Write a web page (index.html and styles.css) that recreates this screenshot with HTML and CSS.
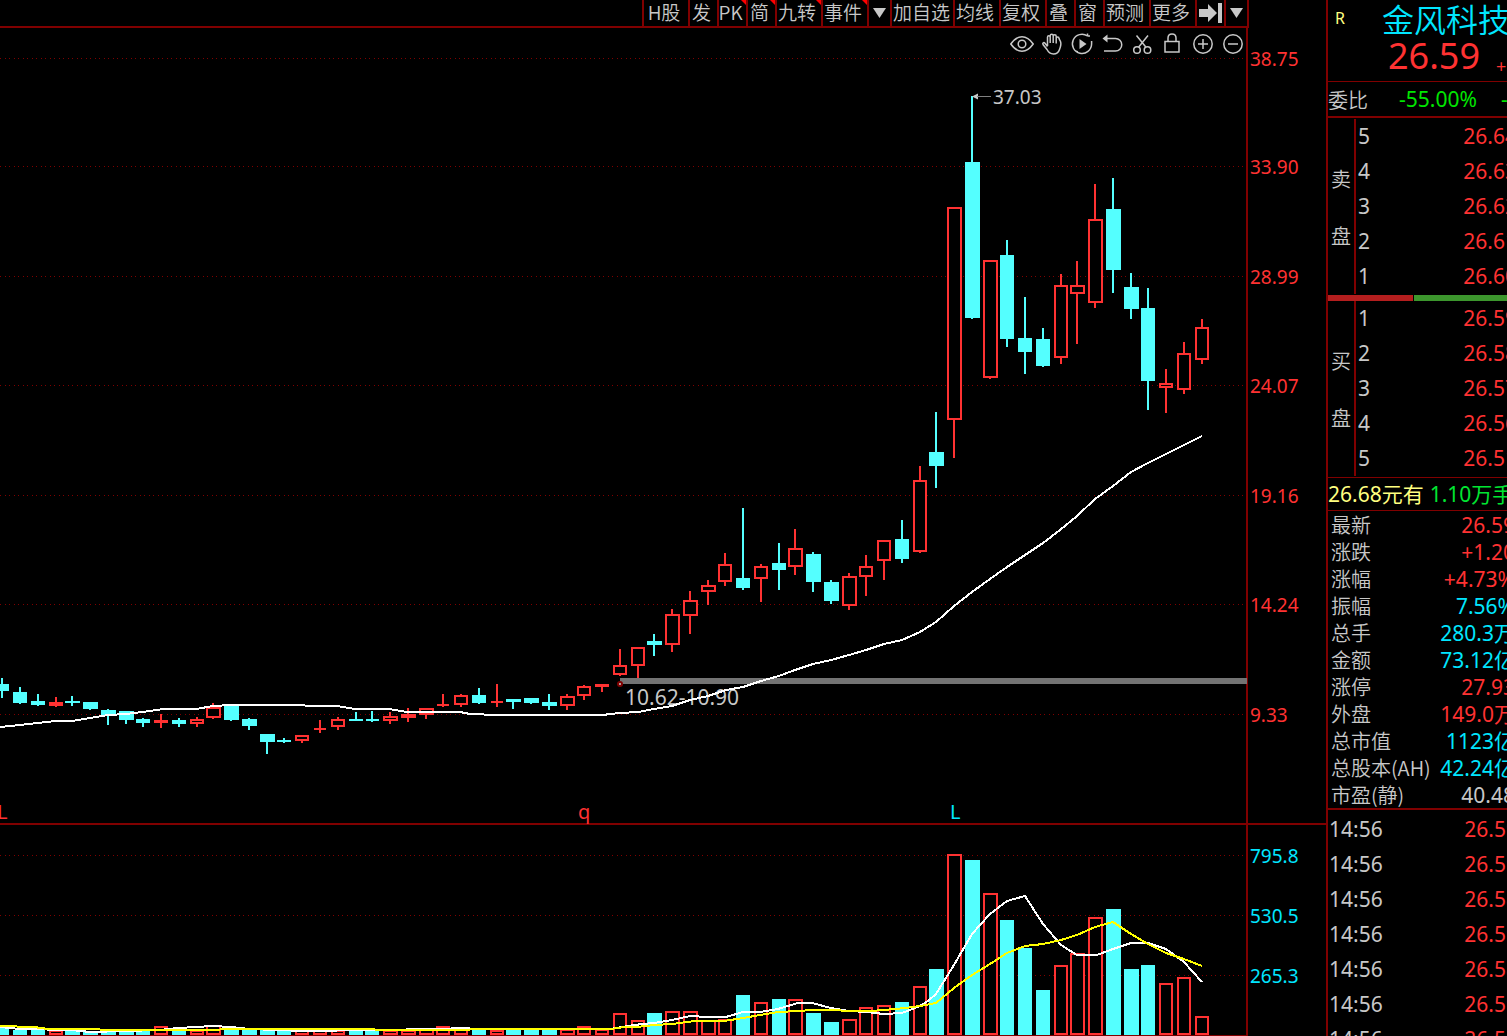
FILE: index.html
```
<!DOCTYPE html>
<html lang="zh-CN">
<head>
<meta charset="utf-8">
<title>金风科技 日K线</title>
<link rel="stylesheet" href="styles.css">
</head>
<body>
<main class="terminal">
  <section class="charts">
    <nav class="toolbar">
      <button class="tool two">H股</button>
      <button class="tool">发</button>
      <button class="tool flag">PK</button>
      <button class="tool flag">简</button>
      <button class="tool two flag">九转</button>
      <button class="tool two flag">事件</button>
      <button class="tool drop" aria-label="事件菜单"><svg width="13" height="10" viewBox="0 0 13 10"><path d="M0 0H13L6.500 10Z" fill="#c8c8c8"/></svg></button>
      <button class="tool three">加自选</button>
      <button class="tool two">均线</button>
      <button class="tool two">复权</button>
      <button class="tool">叠</button>
      <button class="tool">窗</button>
      <button class="tool two">预测</button>
      <button class="tool two">更多</button>
      <button class="tool icon" aria-label="最新"><svg width="23" height="20" viewBox="0 0 23 20"><path d="M0 6H9V1L18 10L9 19V14H0Z M19 0H23V20H19Z" fill="#c8c8c8"/></svg></button>
      <button class="tool drop" aria-label="更多菜单"><svg width="13" height="10" viewBox="0 0 13 10"><path d="M0 0H13L6.500 10Z" fill="#c8c8c8"/></svg></button>
    </nav>

    <div class="price">
      <svg class="plot" id="price" viewBox="0 28 1326 795" role="img" aria-label="K线图"></svg>
      <div class="draw-tools">
        <button aria-label="显示"><svg viewBox="0 0 24 24"><path d="M.8 12C4.500 6.700 8 4.800 12 4.800S19.500 6.700 23.200 12C19.500 17.300 16 19.200 12 19.200S4.500 17.300 .8 12Z"/><circle cx="12" cy="12" r="3.800"/></svg></button>
        <button aria-label="拖动"><svg viewBox="0 0 24 24"><path d="M7.500 14V5.200C7.500 3.200 10.200 3.200 10.200 5.200V11V3.700C10.200 1.700 13.200 1.700 13.200 3.700V11V4.200C13.200 2.400 16.200 2.400 16.200 4.200V11.500V6.500C16.200 4.600 19 4.600 19 6.500L20.500 9.500C21.500 12 20.300 15.500 19.500 17.500C18.500 20.500 16.500 22 13.500 22C10 22 8.500 20.500 7 17.500L3 12.500C2.200 11 3.800 10 5 11.200L7.500 14.500"/></svg></button>
        <button aria-label="回放"><svg viewBox="0 0 24 24"><path d="M17.500 4A9.600 9.600 0 1 0 21.600 12M17.500 4V1.500M17.500 4H20M8 20L5.500 19M21.600 12V9"/><path d="M9.500 7L16.500 12L9.500 17Z" fill="#c8c8c8" stroke="none"/></svg></button>
        <button aria-label="撤销"><svg viewBox="0 0 24 24"><path d="M4 6.500H15.500A6.250 6.250 0 0 1 15.500 19H4"/><path d="M7.500 2.500V10.500L2.500 6.500Z" fill="#c8c8c8" stroke="none"/></svg></button>
        <button aria-label="剪切"><svg viewBox="0 0 24 24"><circle cx="7" cy="18" r="3.300"/><circle cx="17.500" cy="18" r="3.300"/><path d="M6.500 3.500L15.800 15M18 3.500L8.700 15"/></svg></button>
        <button aria-label="锁定"><svg viewBox="0 0 24 24"><path d="M5 9.500H19V20H5ZM8 9.500V6C8 .5 16 .5 16 6V9.500"/></svg></button>
        <button aria-label="放大"><svg viewBox="0 0 24 24"><circle cx="13" cy="12" r="9.200"/><path d="M8 12H18M13 7V17"/></svg></button>
        <button aria-label="缩小"><svg viewBox="0 0 24 24"><circle cx="13" cy="12" r="9.200"/><path d="M8 12H18"/></svg></button>
      </div>
    </div>

    <svg class="plot volume" id="volume" viewBox="0 825 1326 211" role="img" aria-label="成交量"></svg>
  </section>

  <aside class="quote">
    <header class="stock">
      <div class="title"><span class="mark">R</span><h1>金风科技</h1></div>
      <div class="last"><strong>26.59</strong><span>+1.20</span></div>
    </header>
    <div class="ratio"><span class="cn">委比</span><b>-55.00%</b><b>-1.52万</b></div>

    <section class="book sell">
      <div class="side"><span>卖</span><span>盘</span></div>
      <table>
        <tr><th>5</th><td>26.64</td></tr>
        <tr><th>4</th><td>26.63</td></tr>
        <tr><th>3</th><td>26.62</td></tr>
        <tr><th>2</th><td>26.61</td></tr>
        <tr><th>1</th><td>26.60</td></tr>
      </table>
    </section>
    <div class="balance"><i></i><i></i></div>
    <section class="book buy">
      <div class="side"><span>买</span><span>盘</span></div>
      <table>
        <tr><th>1</th><td>26.59</td></tr>
        <tr><th>2</th><td>26.58</td></tr>
        <tr><th>3</th><td>26.57</td></tr>
        <tr><th>4</th><td>26.56</td></tr>
        <tr><th>5</th><td>26.51</td></tr>
      </table>
    </section>

    <p class="alert"><span>26.68元有</span><span class="lots">1.10万手</span></p>

    <dl class="facts">
      <div><dt>最新</dt><dd class="up">26.59</dd></div>
      <div><dt>涨跌</dt><dd class="up">+1.20</dd></div>
      <div><dt>涨幅</dt><dd class="up">+4.73%</dd></div>
      <div><dt>振幅</dt><dd>7.56%</dd></div>
      <div><dt>总手</dt><dd>280.3万</dd></div>
      <div><dt>金额</dt><dd>73.12亿</dd></div>
      <div><dt>涨停</dt><dd class="up">27.93</dd></div>
      <div><dt>外盘</dt><dd class="up">149.0万</dd></div>
      <div><dt>总市值</dt><dd>1123亿</dd></div>
      <div><dt>总股本(AH)</dt><dd>42.24亿</dd></div>
      <div><dt>市盈(静)</dt><dd class="plain">40.48</dd></div>
    </dl>

    <table class="ticks">
      <tr><th>14:56</th><td>26.59</td></tr>
      <tr><th>14:56</th><td>26.59</td></tr>
      <tr><th>14:56</th><td>26.58</td></tr>
      <tr><th>14:56</th><td>26.59</td></tr>
      <tr><th>14:56</th><td>26.58</td></tr>
      <tr><th>14:56</th><td>26.59</td></tr>
      <tr><th>14:56</th><td>26.59</td></tr>
    </table>
  </aside>
</main>
<script src="chart.js"></script>
</body>
</html>
```
FILE: styles.css
```
* { box-sizing: border-box; }

body {
  margin: 0;
  background: #000;
  color: #c8c8c8;
  font: 21px/27px "Noto Sans", "Noto Sans CJK SC", sans-serif;
}

button {
  margin: 0;
  padding: 0;
  border: 0;
  background: none;
  color: inherit;
  font: inherit;
}

.terminal {
  display: flex;
  height: 100vh;
  overflow: hidden;
}

.charts {
  flex: 1;
  min-width: 0;
}

/* top tool strip */
.toolbar {
  display: flex;
  justify-content: flex-end;
  height: 28px;
  margin-right: 77px;
  border-bottom: 2px solid #800000;
  font: 350 19px/24px "Noto Sans CJK SC", sans-serif;
}

.tool {
  position: relative;
  display: flex;
  align-items: center;
  justify-content: center;
  width: 29px;
  padding: 0 4px 2px 0;
  border-left: 2px solid #800000;
  white-space: nowrap;
}

.tool.two { width: 46px; }
.tool.three { width: 63px; padding-right: 2px; }
.tool.drop { width: 23px; padding: 0; }
.tool.icon { padding: 0; }
.tool:last-child { width: 25px; border-right: 2px solid #800000; }

.tool.flag::after {
  content: "";
  position: absolute;
  top: 0;
  right: 0;
  border-top: 5px solid #f00;
  border-left: 5px solid transparent;
}

/* charts */
.price { position: relative; }

.plot {
  display: block;
  width: 100%;
  height: auto;
  overflow: visible;
  font-size: 19px;
}

.volume { border-top: 2px solid #800000; box-sizing: content-box; }

.draw-tools {
  position: absolute;
  top: 4px;
  right: 79px;
  display: flex;
}

.draw-tools button {
  display: flex;
  justify-content: center;
  width: 30px;
}

.draw-tools svg {
  width: 24px;
  height: 24px;
  fill: none;
  stroke: #c8c8c8;
  stroke-width: 1.500;
}

.grid { stroke: #800000; stroke-dasharray: 1 4 1 3; }
.frame { fill: #800000; }
.up-bar { fill: #000; stroke: #ff3232; stroke-width: 2; }
.up-wick { fill: #ff3232; }
.down { fill: #54ffff; }
.line { fill: none; stroke: #fff; stroke-width: 2; shape-rendering: crispEdges; }
.line.slow { stroke: #ff0; }
.red-text { fill: #ff3232; }
.cyan-text { fill: #00e6ff; }
.gray-text { fill: #c8c8c8; }
.gap-text { fill: #c8c8c8; font-size: 21px; }
.event { font-size: 20px; }

/* quote panel */
.quote {
  flex: 0 0 181px;
  overflow: hidden;
  border-left: 2px solid #800000;
  white-space: nowrap;
}

.stock {
  height: 82px;
  border-bottom: 1px solid #800000;
}

.title { display: flex; height: 37px; }
.mark {
  flex: 0 0 54px;
  padding: 5px 0 0 7px;
  color: #ffff80;
  font-size: 16px;
}

h1 {
  margin: 0;
  color: #00e6ff;
  font: 350 32px/37px "Noto Sans CJK SC", sans-serif;
}

.last {
  display: flex;
  align-items: flex-end;
  gap: 16px;
  padding-left: 60px;
  color: #ff3232;
  line-height: 38px;
}

.last strong { font-size: 36px; font-weight: 400; }
.last span { font-size: 18px; line-height: 18px; }

.ratio {
  display: flex;
  gap: 24px;
  height: 36px;
  border-bottom: 2px solid #800000;
  line-height: 35px;
}

.ratio b { color: #00e600; font-weight: 400; }
.ratio b:first-of-type { margin-left: 7px; }

.cn, .side, dt { font: 350 20px/27px "Noto Sans CJK SC", sans-serif; }
.ratio .cn { line-height: 35px; }

.book { display: flex; margin-right: -10px; }
.sell { padding: 1px 0; }
.buy { padding-bottom: 1px; }

.side {
  display: flex;
  flex-direction: column;
  align-items: center;
  justify-content: center;
  gap: 30px;
  width: 28px;
  border-right: 2px solid #800000;
}

table {
  flex: 1;
  border-collapse: collapse;
}

th, td {
  height: 35px;
  padding: 0 0 0 2px;
  font-weight: 400;
  text-align: left;
}

td { color: #ff3232; text-align: right; }

.balance {
  display: grid;
  grid-template-columns: 85px 1fr;
  gap: 1px;
  height: 6px;
}

.balance i { background: #3c962d; }
.balance i:first-child { background: #b41e1e; }

.alert {
  display: flex;
  gap: 6px;
  height: 34px;
  margin: 0;
  border: solid #800000;
  border-width: 1px 0;
  color: #ffff80;
  line-height: 32px;
}

.lots { color: #00e632; }

.facts { margin: 0; border-bottom: 2px solid #800000; }
.facts div {
  display: flex;
  justify-content: space-between;
  height: 27px;
  margin-right: -8px;
  padding-left: 3px;
}

dd { margin: 0; color: #00e6ff; line-height: 28px; }
dd.up { color: #ff3232; }
dd.plain { color: #c8c8c8; }

.ticks { width: 190px; margin-top: 2px; }
.ticks th { padding-left: 1px; }
```
FILE: chart.js
```
// One row per trading day:
// wick x, body width, direction, high, low, body top, body bottom, volume top
const days = [
  [1,14,'d',678,698,684,691,1028],[19,14,'d',687,704,692,703,1030],[37,14,'d',694,706,701,705,1030],
  [55,14,'u',697,707,702,706,1030],[71,15,'d',696,706,701,703,1029],[89,15,'d',702,710,702,709,1031],
  [107,15,'d',709,725,710,715,1030],[125,15,'d',711,724,711,720,1030],[142,14,'d',718,727,719,723,1030],
  [160,14,'u',714,728,720,723,1026],[178,14,'d',718,727,720,724,1028],[196,14,'u',717,727,719,724,1030],
  [212,15,'u',703,719,707,718,1025],[230,15,'d',706,721,706,720,1029],[248,15,'d',718,730,719,726,1029],
  [266,15,'d',734,754,734,742,1030],[283,14,'d',738,743,740,742,1031],[301,14,'u',735,743,735,741,1029],
  [319,12,'u',720,733,728,730,1030],[337,14,'u',717,730,719,727,1030],[355,14,'d',712,721,719,721,1030],
  [371,13,'d',711,722,719,721,1030],[389,15,'u',712,724,716,721,1030],[407,15,'u',708,722,714,718,1030],
  [425,15,'u',708,719,708,715,1028],[442,12,'u',694,707,704,706,1026],[460,14,'u',694,707,695,705,1029],
  [478,14,'d',688,704,695,703,1029],[496,12,'u',684,707,701,703,1030],[512,15,'d',699,709,699,702,1030],
  [530,15,'d',698,704,698,703,1030],[548,15,'d',694,710,702,706,1030],[566,15,'u',694,710,696,706,1029],
  [583,14,'u',685,700,686,696,1026],[601,14,'u',684,692,684,687,1029],[619,14,'u',649,676,665,675,1013],
  [637,14,'u',647,679,647,666,1020],[653,15,'d',634,656,641,645,1013],[671,15,'u',609,652,614,645,1011],
  [689,15,'u',591,634,600,616,1011],[707,15,'u',580,605,585,592,1020],[724,14,'u',553,586,564,582,1019],
  [742,14,'d',508,590,578,588,995],[760,14,'u',564,602,566,579,1002],[778,14,'d',543,590,563,570,999],
  [794,15,'u',529,575,548,567,999],[812,15,'d',552,592,554,582,1013],[830,15,'d',580,604,582,601,1022],
  [848,15,'u',573,610,576,606,1019],[865,14,'u',555,596,566,577,1007],[883,14,'u',540,580,540,561,1005],
  [901,14,'d',520,563,539,559,1002],[919,14,'u',466,553,480,552,986],[935,15,'d',412,488,452,466,969],
  [953,15,'u',207,458,207,420,854],[971,15,'d',96,319,162,318,860],[989,15,'u',260,379,260,378,893],
  [1006,14,'d',240,347,255,339,920],[1024,14,'d',297,374,338,352,948],[1042,14,'d',328,367,339,366,990],
  [1060,14,'u',274,364,285,358,965],[1076,15,'u',261,344,285,294,953],[1094,15,'u',184,308,219,303,917],
  [1112,15,'d',178,293,209,270,909],[1130,15,'d',273,319,287,309,969],[1147,14,'d',288,410,308,381,965],
  [1165,14,'u',369,413,383,388,983],[1183,14,'u',342,394,353,390,977],[1201,14,'u',319,364,327,360,1016]
];

const priceAverage = '0,727 20,725 38,723 56,721 72,721 90,718 108,715 126,714 150,711 163,709 196,709 213,706 232,705 300,705 310,706 337,706 355,709 389,709 407,712 460,712 470,714 498,715 602,715 620,713 638,712 654,709 672,706 690,700 708,696 726,690 743,687 761,681 779,676 795,670 813,664 831,660 849,655 866,650 884,644 902,640 920,632 936,622 954,606 972,592 990,579 1007,567 1025,555 1043,543 1060,530 1077,516 1095,499 1113,486 1131,472 1148,463 1166,454 1184,445 1202,436';
const volumeFast = '0,1027 20,1029 72,1030 90,1032 160,1030 178,1028 213,1026 231,1027 249,1029 305,1031 370,1030 442,1029 460,1028 480,1029 610,1029 628,1026 642,1024 654,1023 672,1020 690,1016 708,1017 726,1017 743,1012 760,1012 778,1009 798,1003 812,1003 831,1008 849,1011 866,1012 884,1014 902,1013 920,1006 928,1001 936,994 954,965 972,934 990,914 1007,901 1025,896 1043,924 1061,945 1077,955 1097,955 1113,949 1131,943 1148,943 1166,949 1184,962 1202,982';
const volumeSlow = '0,1026 34,1027 48,1029 90,1029 110,1030 210,1030 230,1029 370,1029 380,1030 460,1030 480,1029 610,1029 625,1027 637,1027 654,1025 672,1024 695,1021 724,1021 743,1018 760,1015 778,1012 798,1011 812,1010 870,1011 884,1010 905,1008 920,1006 936,1003 954,988 972,975 990,964 1007,953 1025,946 1043,944 1061,940 1077,935 1095,927 1113,922 1131,934 1148,944 1166,953 1184,959 1202,966';

const rect = (c, x, y, w, h) => `<rect class="${c}" x="${x}" y="${y}" width="${w}" height="${h}"/>`;
const text = (c, x, y, s) => `<text class="${c}" x="${x}" y="${y}">${s}</text>`;
const grid = y => `<path class="grid" d="M0 ${y}.5H1244"/>`;
const line = (c, pts) => `<polyline class="${c}" points="${pts}"/>`;

// Rising days are hollow; a body too thin to be hollow is filled.
function body(dir, x, y, w, h) {
  if (dir === 'd') return rect('down', x, y, w, h);
  if (h < 5) return rect('up-wick', x, y, w, h);
  return rect('up-bar', x + 1, y + 1, w - 2, h - 2);
}

const candles = days.map(([x, w, dir, high, low, top, bottom]) =>
  rect(dir === 'd' ? 'down' : 'up-wick', x, high, 2, low - high) +
  body(dir, w < 14 ? x - 5 : x - 6, top, w, bottom - top)).join('');

const bars = days.map(([x, w, dir, , , , , top]) =>
  body(dir, x - 6, top, Math.max(w, 14), 1035 - top)).join('');

const prices = [['38.75', 58], ['33.90', 166], ['28.99', 276], ['24.07', 385], ['19.16', 495], ['14.24', 604], ['9.33', 714]];
const volumes = [['795.8', 855], ['530.5', 915], ['265.3', 975]];

document.getElementById('price').innerHTML =
  prices.map(([s, y]) => grid(y) + text('red-text', 1250, y + 8, s)).join('') +
  rect('frame', 1246, 28, 2, 795) + candles +
  '<rect x="620" y="678" width="627" height="6" fill="#737373"/>' +
  text('gap-text', 625, 705, '10.62-10.90') +
  line('line', priceAverage) +
  '<circle cx="620" cy="684" r="2" fill="#c8c8c8" stroke="#800000" stroke-width="2"/>' +
  '<path d="M972 96.500L978 93.500V99.500Z" fill="#c8c8c8"/><path d="M977 96.500H991" stroke="#808080"/>' +
  text('gray-text', 993, 104, '37.03') +
  text('red-text event', -3, 819, 'L') + text('red-text event', 578, 819, 'q') + text('cyan-text event', 950, 819, 'L');

document.getElementById('volume').innerHTML =
  volumes.map(([s, y]) => grid(y) + text('cyan-text', 1250, y + 8, s)).join('') +
  rect('frame', 1246, 825, 2, 211) + bars + rect('frame', 0, 1035, 1246, 1) +
  line('line', volumeFast) + line('line slow', volumeSlow);
```
